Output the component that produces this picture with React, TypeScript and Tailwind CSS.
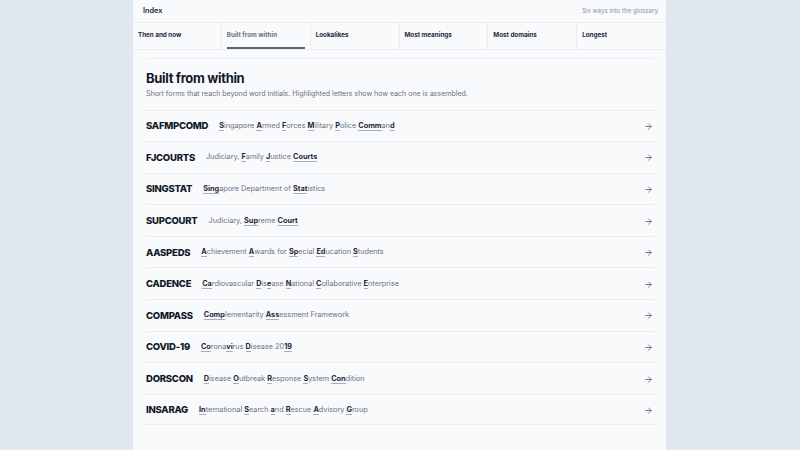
import React from 'react';
import { ArrowRight } from 'lucide-react';

type Part = string | [string];

type Entry = {
  short: string;
  parts: Part[];
};

const tabs = ['Then and now', 'Built from within', 'Lookalikes', 'Most meanings', 'Most domains', 'Longest'];

const entries: Entry[] = [
  { short: 'SAFMPCOMD', parts: [['S'], 'ingapore ', ['A'], 'rmed ', ['F'], 'orces ', ['M'], 'ilitary ', ['P'], 'olice ', ['Comm'], 'an', ['d']] },
  { short: 'FJCOURTS', parts: ['Judiciary, ', ['F'], 'amily ', ['J'], 'ustice ', ['Courts']] },
  { short: 'SINGSTAT', parts: [['Sing'], 'apore Department of ', ['Stat'], 'istics'] },
  { short: 'SUPCOURT', parts: ['Judiciary, ', ['Sup'], 'reme ', ['Court']] },
  { short: 'AASPEDS', parts: [['A'], 'chievement ', ['A'], 'wards for ', ['Sp'], 'ecial ', ['Ed'], 'ucation ', ['S'], 'tudents'] },
  { short: 'CADENCE', parts: [['Ca'], 'rdiovascular ', ['D'], 'is', ['e'], 'ase ', ['N'], 'ational ', ['C'], 'ollaborative ', ['E'], 'nterprise'] },
  { short: 'COMPASS', parts: [['Comp'], 'lementarity ', ['Ass'], 'essment Framework'] },
  { short: 'COVID-19', parts: [['Co'], 'rona', ['vi'], 'rus ', ['D'], 'isease 20', ['19']] },
  { short: 'DORSCON', parts: [['D'], 'isease ', ['O'], 'utbreak ', ['R'], 'esponse ', ['S'], 'ystem ', ['Con'], 'dition'] },
  { short: 'INSARAG', parts: [['In'], 'ternational ', ['S'], 'earch ', ['a'], 'nd ', ['R'], 'escue ', ['A'], 'dvisory ', ['G'], 'roup'] },
];

function Expansion({ parts }: { parts: Part[] }) {
  return (
    <span className="text-[7.3px] text-[#6b7280] whitespace-pre">
      {parts.map((p, i) =>
        typeof p === 'string' ? (
          <span key={i}>{p}</span>
        ) : (
          <span key={i} className="font-bold text-[#1f2937] border-b border-[#a3aec2]">
            {p[0]}
          </span>
        )
      )}
    </span>
  );
}

export default function App() {
  return (
    <div
      className="w-[800px] h-[450px] overflow-hidden bg-[#e2e8f0] flex justify-center"
      style={{ fontFamily: 'Inter, "Liberation Sans", sans-serif' }}
    >
      <div className="w-[533px] ml-[-1px] bg-[#f8fafc] flex flex-col">
        <div className="h-[23px] flex items-center justify-between pl-[10px] pr-[8px] border-b border-[#e9edf2]">
          <span className="text-[7.3px] font-semibold text-[#1f2937]">Index</span>
          <span className="text-[6.2px] text-[#8b929c]">Six ways into the glossary</span>
        </div>

        <div className="h-[27px] grid grid-cols-6 border-b border-[#e9edf2]">
          {tabs.map((t, i) => (
            <div
              key={t}
              className={
                'relative flex items-center px-[5px] text-[6.3px] font-bold ' +
                (i < tabs.length - 1 ? 'border-r border-[#e9edf2] ' : '') +
                (i === 1 ? 'text-[#6b7280]' : 'text-[#1f2937]')
              }
            >
              {t}
              {i === 1 && <div className="absolute left-[5px] right-[5px] bottom-0 h-[2px] bg-[#5b6472]" />}
            </div>
          ))}
        </div>

        <div className="mt-[8px] mx-[13px] mr-[11px] border-t border-[#eceff3]">
          <div className="pt-[10px] pb-[10px]">
            <h1 className="text-[13px] font-bold text-[#111827] tracking-tight leading-[18px]">Built from within</h1>
            <p className="mt-[2px] text-[7px] text-[#6b7280]">
              Short forms that reach beyond word initials. Highlighted letters show how each one is assembled.
            </p>
          </div>

          <div className="flex flex-col">
            {entries.map((e) => (
              <div
                key={e.short}
                className="h-[31.6px] flex items-center pt-[1px] border-t border-[#e9edf2] last:border-b"
              >
                <span className="text-[9.5px] font-extrabold text-[#111827] tracking-tight mr-[11px]">{e.short}</span>
                <Expansion parts={e.parts} />
                <ArrowRight className="ml-auto mr-[2px] text-[#4b5563]" size={9} strokeWidth={2} />
              </div>
            ))}
          </div>
        </div>
      </div>
    </div>
  );
}
